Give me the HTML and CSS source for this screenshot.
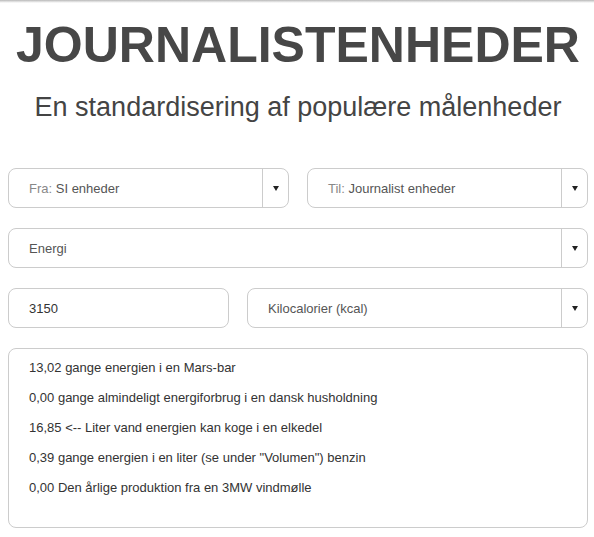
FILE: index.html
```html
<!DOCTYPE html>
<html lang="da">
<head>
<meta charset="utf-8">
<title>Journalistenheder</title>
<link rel="stylesheet" href="styles.css">
</head>
<body>
<div class="topshade"></div>
<main class="page">
  <h1 class="title">JOURNALISTENHEDER</h1>
  <h2 class="subtitle">En standardisering af populære målenheder</h2>
  <form class="converter">
    <div class="row row-half">
      <div class="select"><span class="select-text"><span class="prefix">Fra:</span> SI enheder</span><span class="select-arrow"><span class="tri"></span></span></div>
      <div class="select"><span class="select-text"><span class="prefix">Til:</span> Journalist enheder</span><span class="select-arrow"><span class="tri"></span></span></div>
    </div>
    <div class="row">
      <div class="select"><span class="select-text">Energi</span><span class="select-arrow"><span class="tri"></span></span></div>
    </div>
    <div class="row row-amount">
      <div class="input">3150</div>
      <div class="select"><span class="select-text">Kilocalorier (kcal)</span><span class="select-arrow"><span class="tri"></span></span></div>
    </div>
    <div class="results">
      <p class="result">13,02 gange energien i en Mars-bar</p>
      <p class="result">0,00 gange almindeligt energiforbrug i en dansk husholdning</p>
      <p class="result">16,85 &lt;-- Liter vand energien kan koge i en elkedel</p>
      <p class="result">0,39 gange energien i en liter (se under "Volumen") benzin</p>
      <p class="result">0,00 Den årlige produktion fra en 3MW vindmølle</p>
    </div>
  </form>
</main>
</body>
</html>
```
FILE: styles.css
```css
html, body {
  margin: 0;
  padding: 0;
  background: #fff;
}
body {
  font-family: "Liberation Sans", Arial, sans-serif;
  color: #333;
}
.topshade {
  height: 3px;
  background: linear-gradient(#b8b8b8, #e6e6e6 60%, #fff);
}
.page {
  padding: 0 6px 0 8px;
}
.title {
  margin: 14px 0 0;
  font-size: 50px;
  line-height: 56px;
  font-weight: bold;
  text-align: center;
  color: #474747;
}
.subtitle {
  margin: 18px 0 0;
  font-size: 27px;
  line-height: 32px;
  font-weight: normal;
  text-align: center;
  color: #444;
}
.converter {
  margin-top: 45px;
  display: flex;
  flex-direction: column;
  gap: 20px;
}
.row {
  display: flex;
  gap: 18px;
}
.row > .select {
  flex: 1 1 0;
}
.row-amount > .input {
  flex: 0 0 221px;
}
.select, .input {
  box-sizing: border-box;
  height: 40px;
  border: 1px solid #ccc;
  border-radius: 8px;
  display: flex;
  align-items: center;
  font-size: 13px;
  color: #555;
  background: #fff;
}
.input {
  padding-left: 20px;
  color: #333;
}
.select-text {
  flex: 1;
  padding-left: 20px;
  white-space: nowrap;
}
.prefix {
  color: #888;
}
.select-arrow {
  align-self: stretch;
  width: 25px;
  border-left: 1px solid #ccc;
  display: flex;
  align-items: center;
  justify-content: center;
}
.tri {
  width: 0;
  height: 0;
  border-left: 3.5px solid transparent;
  border-right: 3.5px solid transparent;
  border-top: 5px solid #222;
}
.results {
  box-sizing: border-box;
  height: 180px;
  border: 1px solid #ccc;
  border-radius: 8px;
  padding: 9px 20px;
}
.result {
  margin: 0 0 10px;
  font-size: 13px;
  line-height: 20px;
  color: #333;
}
```
